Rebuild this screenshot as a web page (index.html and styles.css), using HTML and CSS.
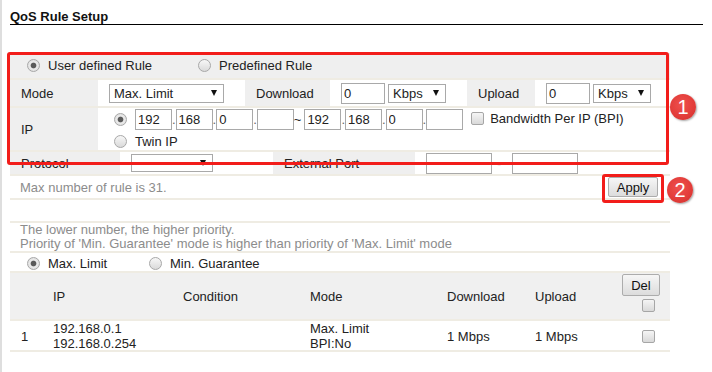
FILE: index.html
```html
<!DOCTYPE html>
<html>
<head>
<meta charset="utf-8">
<link rel="stylesheet" href="styles.css">
</head>
<body>
<div class="page">
  <h1 class="title">QoS Rule Setup</h1>

  <div class="form">
    <div class="rule-type">
      <label class="opt"><input type="radio" class="radio" name="rt" checked>User defined Rule</label>
      <label class="opt"><input type="radio" class="radio" name="rt">Predefined Rule</label>
    </div>

    <div class="row mode-row">
      <div class="lbl">Mode</div>
      <div class="val"><span class="selwrap w-mode"><select class="sel"><option>Max. Limit</option></select></span></div>
      <div class="lbl">Download</div>
      <div class="val"><input class="txt w-rate" value="0"><span class="selwrap w-unit"><select class="sel"><option>Kbps</option></select></span></div>
      <div class="lbl">Upload</div>
      <div class="val"><input class="txt w-rate" value="0"><span class="selwrap w-unit"><select class="sel"><option>Kbps</option></select></span></div>
    </div>

    <div class="row ip-row">
      <div class="lbl">IP</div>
      <div class="val ip-val">
        <div class="ip-line">
          <input type="radio" class="radio" name="ipt" checked>
          <input class="txt ip" value="192"><span class="dot">.</span><input class="txt ip" value="168"><span class="dot">.</span><input class="txt ip" value="0"><span class="dot">.</span><input class="txt ip" value="">
          <span class="tilde">~</span>
          <input class="txt ip" value="192"><span class="dot">.</span><input class="txt ip" value="168"><span class="dot">.</span><input class="txt ip" value="0"><span class="dot">.</span><input class="txt ip" value="">
          <label class="bpi"><input type="checkbox" class="chk">Bandwidth Per IP (BPI)</label>
        </div>
        <label class="twin"><input type="radio" class="radio" name="ipt">Twin IP</label>
      </div>
    </div>

    <div class="row proto-row">
      <div class="lbl">Protocol</div>
      <div class="val"><span class="selwrap w-proto"><select class="sel"><option></option></select></span></div>
      <div class="lbl">External Port</div>
      <div class="val"><input class="txt port" value=""><span class="dash">-</span><input class="txt port" value=""></div>
    </div>

    <div class="apply-row">
      <span>Max number of rule is 31.</span>
      <button class="btn apply">Apply</button>
    </div>
  </div>

  <div class="notes">
    <div>The lower number, the higher priority.</div>
    <div>Priority of 'Min. Guarantee' mode is higher than priority of 'Max. Limit' mode</div>
  </div>

  <div class="mode-pick">
    <label class="opt"><input type="radio" class="radio" name="mp" checked>Max. Limit</label>
    <label class="opt"><input type="radio" class="radio" name="mp">Min. Guarantee</label>
  </div>

  <div class="rules">
    <div class="rules-row rules-head">
      <div class="c c1"></div>
      <div class="c">IP</div>
      <div class="c">Condition</div>
      <div class="c">Mode</div>
      <div class="c">Download</div>
      <div class="c">Upload</div>
      <div class="c del-cell"><button class="btn del">Del</button><input type="checkbox" class="chk"></div>
    </div>
    <div class="rules-row rules-data">
      <div class="c c1">1</div>
      <div class="c">192.168.0.1<br>192.168.0.254</div>
      <div class="c"></div>
      <div class="c">Max. Limit<br>BPI:No</div>
      <div class="c">1 Mbps</div>
      <div class="c">1 Mbps</div>
      <div class="c chk-cell"><input type="checkbox" class="chk"></div>
    </div>
  </div>

  <div class="mark-box box1"></div>
  <div class="mark-box box2"></div>
  <div class="badge b1">1</div>
  <div class="badge b2">2</div>
</div>
</body>
</html>
```
FILE: styles.css
```css
html, body {
  margin: 0;
  background: #fff;
}
body {
  font-family: "Liberation Sans", Arial, sans-serif;
  font-size: 13px;
  color: #222;
}
.page {
  position: relative;
  border-left: 2px solid #dedede;
  padding: 9px 9px 0 8px;
  min-height: 372px;
  box-sizing: border-box;
}
.title {
  margin: 0;
  font-size: 13px;
  font-weight: bold;
  line-height: 15px;
  border-bottom: 1px solid #000;
  color: #111;
}
.form {
  margin-top: 28px;
  width: 660px;
}
.rule-type {
  display: grid;
  grid-template-columns: 171px auto;
  height: 25px;
  align-items: center;
  background: #efefef;
  padding-left: 17px;
  border-bottom: 2px solid #efece3;
}
.opt {
  display: flex;
  align-items: center;
}
.radio {
  -webkit-appearance: none;
  appearance: none;
  width: 13px;
  height: 13px;
  margin: 0 8px 0 0;
  border-radius: 50%;
  border: 1px solid #a8a8a8;
  box-sizing: border-box;
  background: linear-gradient(#f7f7f7, #dadada);
  flex: none;
}
.radio:checked {
  background: radial-gradient(circle, #5a5a5a 0, #5a5a5a 2.4px, #ececec 3.3px, #d6d6d6 100%);
}
.chk {
  -webkit-appearance: none;
  appearance: none;
  width: 13px;
  height: 13px;
  box-sizing: border-box;
  border: 1px solid #a6a6a6;
  border-radius: 2px;
  background: linear-gradient(#f5f5f5, #d9d9d9);
  margin: 0;
  flex: none;
}
.row {
  display: grid;
  border-bottom: 2px solid #efece3;
}
.lbl {
  background: #efefef;
  padding-left: 11px;
  display: flex;
  align-items: center;
}
.val {
  display: flex;
  align-items: center;
  padding-left: 11px;
}
.mode-row {
  grid-template-columns: 88px 147px 85px 137px 68px 1fr;
  height: 26px;
}
.ip-row {
  grid-template-columns: 88px 1fr;
  height: 42px;
}
.proto-row {
  grid-template-columns: 110px 153px 142px 1fr;
  height: 22px;
}
.txt {
  box-sizing: border-box;
  height: 21px;
  border: 1px solid #a9a9a9;
  border-radius: 0;
  padding: 0 2px;
  margin: 0;
  font: 13px "Liberation Sans", Arial, sans-serif;
  color: #222;
  background: #fff;
  outline: none;
}
.w-rate {
  width: 44px;
  margin-right: 3px;
}
.selwrap {
  position: relative;
  display: inline-flex;
}
.selwrap::after {
  content: "";
  position: absolute;
  right: 7px;
  top: 50%;
  margin-top: -3px;
  border-left: 3.5px solid transparent;
  border-right: 3.5px solid transparent;
  border-top: 6px solid #111;
  pointer-events: none;
}
.sel {
  -webkit-appearance: none;
  appearance: none;
  box-sizing: border-box;
  height: 19px;
  border: 1px solid #a9a9a9;
  border-radius: 0;
  background: #fff;
  font: 13px "Liberation Sans", Arial, sans-serif;
  color: #222;
  padding: 0 0 0 4px;
  margin: 0;
  outline: none;
}
.w-mode .sel { width: 115px; }
.w-unit .sel { width: 58px; }
.w-proto .sel { width: 82px; height: 18px; }

.ip-val {
  flex-direction: column;
  align-items: flex-start;
  justify-content: flex-start;
  padding: 1px 0 0 16px;
}
.ip-line {
  display: flex;
  align-items: center;
}
.ip {
  width: 37px;
}
.dot {
  width: 3.6px;
  line-height: 21px;
  color: #666;
}
.tilde {
  line-height: 21px;
  margin-right: 3px;
}
.bpi {
  display: flex;
  align-items: center;
  margin-left: 8px;
  margin-top: -2px;
}
.bpi .chk {
  margin-right: 6px;
}
.twin {
  display: flex;
  align-items: center;
  margin-top: 4px;
  line-height: 15px;
}
.port {
  width: 66px;
}
.dash {
  width: 15px;
  padding-left: 5px;
}
.apply-row {
  display: flex;
  justify-content: space-between;
  align-items: center;
  height: 22px;
  padding: 0 12px 0 10px;
  color: #8c8c8c;
  border-bottom: 2px solid #efece3;
}
.btn {
  box-sizing: border-box;
  border: 1px solid #acacac;
  border-radius: 2px;
  background: linear-gradient(#f6f6f6, #dcdcdc);
  font: 13px "Liberation Sans", Arial, sans-serif;
  color: #111;
  padding: 0;
  margin: 0;
}
.apply {
  width: 50px;
  height: 20px;
}
.notes {
  margin-top: 21px;
  width: 660px;
  box-sizing: border-box;
  border-top: 2px solid #efece3;
  border-bottom: 2px solid #efece3;
  padding: 0 10px;
  color: #8c8c8c;
  line-height: 14px;
}
.mode-pick {
  display: grid;
  grid-template-columns: 122px auto;
  width: 660px;
  box-sizing: border-box;
  height: 20px;
  padding: 2px 0 0 17px;
  align-items: center;
  border-bottom: 2px solid #efece3;
}
.rules {
  width: 660px;
}
.rules-row {
  display: grid;
  grid-template-columns: 33px 130px 127px 137px 88px 87px 58px;
  align-items: center;
  border-bottom: 2px solid #efece3;
  line-height: 15px;
}
.rules-head {
  background: #f0f0f0;
  height: 46px;
}
.rules-data {
  height: 29px;
}
.c {
  padding-left: 10px;
}
.c1 {
  padding-left: 11px;
}
.del-cell {
  align-self: start;
  display: flex;
  flex-direction: column;
  align-items: flex-start;
  padding-top: 1px;
}
.del {
  width: 38px;
  height: 22px;
}
.del-cell .chk {
  margin: 3px 0 0 20px;
}
.chk-cell {
  display: flex;
  padding-left: 30px;
}
.mark-box {
  position: absolute;
  border: 3px solid #f21d1a;
  border-radius: 3px;
  box-sizing: border-box;
}
.box1 {
  left: 5px;
  top: 52px;
  width: 662px;
  height: 113px;
}
.box2 {
  left: 600px;
  top: 174px;
  width: 62px;
  height: 29px;
}
.badge {
  position: absolute;
  width: 26px;
  height: 26px;
  border-radius: 50%;
  background: radial-gradient(circle at 45% 40%, #ef504d 0, #e23c39 60%, #c52f2d 100%);
  color: #fff;
  font: 20px/26px "Liberation Sans", Arial, sans-serif;
  text-align: center;
  box-shadow: 1px 1px 2px rgba(0, 0, 0, 0.35);
}
.b1 {
  left: 668px;
  top: 94px;
}
.b2 {
  left: 665px;
  top: 177px;
}
```
